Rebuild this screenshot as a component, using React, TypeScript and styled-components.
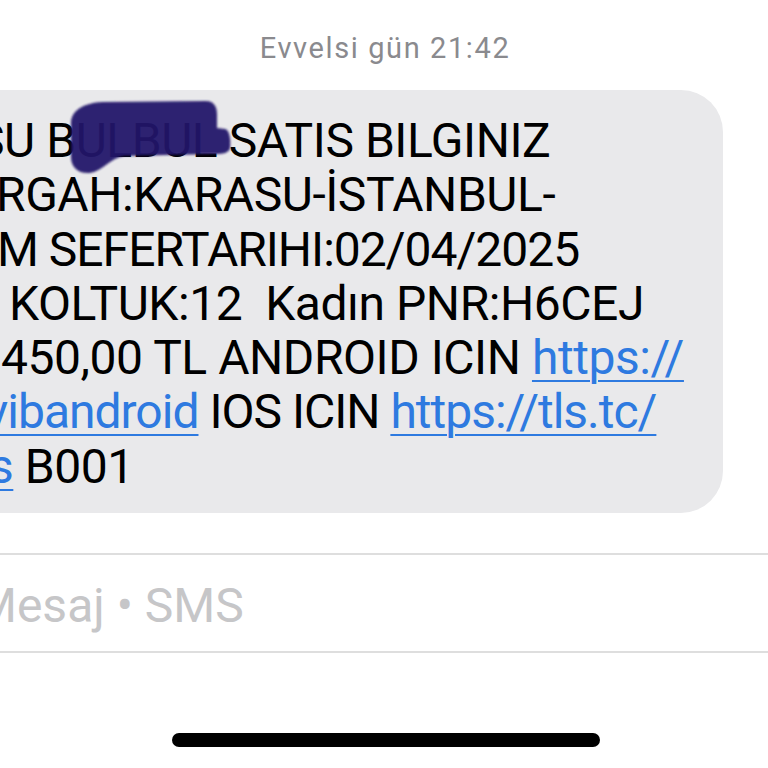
import React from 'react';
import styled, { createGlobalStyle } from 'styled-components';

const GlobalStyle = createGlobalStyle`
	html, body {
		margin: 0;
		padding: 0;
		background: #ffffff;
	}
	body {
		overflow: hidden;
		font-family: Roboto, 'Liberation Sans', sans-serif;
	}
`;

const Screen = styled.div`
	position: relative;
	width: 768px;
	height: 768px;
	overflow: hidden;
	display: flex;
	flex-direction: column;
	background: #ffffff;
`;

const Timestamp = styled.div`
	margin-top: 30px;
	height: 36px;
	line-height: 36px;
	text-align: center;
	font-size: 29px;
	letter-spacing: 1.6px;
	color: #8a8a8e;
	padding-left: 2px;
`;

const Bubble = styled.div`
	margin-top: 24px;
	margin-left: -60px;
	width: 783px;
	box-sizing: border-box;
	padding: 24px 0 19px 60px;
	background: #e9e9eb;
	border-radius: 42px;
`;

const Line = styled.div<{ $shift: number; $tight?: boolean }>`
	margin-left: ${({ $shift }) => $shift}px;
	height: 54.3px;
	line-height: 54.3px;
	font-size: 48px;
	letter-spacing: ${({ $tight }) => ($tight ? '-1px' : '-0.45px')};
	color: #000000;
	white-space: pre;
`;

const Link = styled.span`
	color: #2e7ae0;
	text-decoration: underline;
	text-decoration-thickness: 2px;
	text-underline-offset: 6px;
`;

const Scribble = styled.svg`
	position: absolute;
	left: 0;
	top: 0;
	z-index: 2;
	pointer-events: none;
`;

const Composer = styled.div`
	margin-top: 40px;
	margin-left: -60px;
	width: 900px;
	height: 100px;
	box-sizing: border-box;
	border: 2px solid #dedede;
	border-radius: 50px;
	display: flex;
	align-items: center;
	padding-left: 33px;
`;

const Placeholder = styled.span`
	font-size: 48px;
	letter-spacing: 0;
	color: #c6c6c8;
	white-space: pre;
	margin-top: 4px;
`;

const HomeIndicator = styled.div`
	margin-top: 80px;
	margin-left: 172px;
	width: 428px;
	height: 14px;
	border-radius: 7px;
	background: #000000;
`;

export default function App() {
	return (
		<>
			<GlobalStyle />
			<Screen>
				<Timestamp>Evvelsi gün 21:42</Timestamp>
				<Bubble>
					<Line $shift={-24}>SU BULBUL SATIS BILGINIZ</Line>
					<Line $shift={-4}>RGAH:KARASU-İSTANBUL-</Line>
					<Line $shift={-3} $tight>
						M SEFERTARIHI:02/04/2025
					</Line>
					<Line $shift={9}>KOLTUK:12  Kadın PNR:H6CEJ</Line>
					<Line $shift={1}>
						450,00 TL ANDROID ICIN <Link>https://</Link>
					</Line>
					<Line $shift={-15} $tight>
						<Link>vibandroid</Link> IOS ICIN <Link>https://tls.tc/</Link>
					</Line>
					<Line $shift={-11}>
						<Link>s</Link> B001
					</Line>
				</Bubble>
				<Composer>
					<Placeholder>Mesaj • SMS</Placeholder>
				</Composer>
				<HomeIndicator />
				<Scribble width="768" height="768" viewBox="0 0 768 768">
					<defs>
						<filter id="soft" x="-10%" y="-10%" width="120%" height="120%">
							<feGaussianBlur stdDeviation="1.3" />
						</filter>
					</defs>
					<path
						d="M71 122 C72 109 86 103 102 102 L206 101 C214 101 217 107 217 114 L217 128 L225 129 C230 130 231 142 230 148 C229 153 223 154 215 154 L124 156 C110 158 103 171 90 173 C78 174 71 167 71 157 Z"
						fill="#24166b"
						opacity="0.94"
						filter="url(#soft)"
					/>
				</Scribble>
			</Screen>
		</>
	);
}
